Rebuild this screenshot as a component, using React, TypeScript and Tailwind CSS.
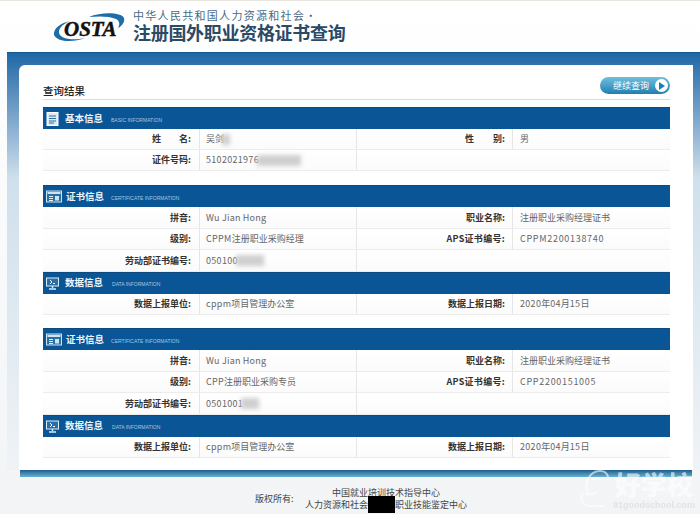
const cjk = '"Noto Sans CJK SC", "Noto Sans", sans-serif';

const DocIcon = () => (
  <svg width="14" height="14" viewBox="0 0 14 14" className="shrink-0">
    <rect x="1" y="0.5" width="11" height="13" fill="#dbeaf4" stroke="#fff" />
    <path d="M3 4h7M3 6.5h7M3 9h7M3 11h5" stroke="#2f6f9f" strokeWidth="1" />
  </svg>
);

const CardIcon = () => (
  <svg width="16" height="13" viewBox="0 0 16 13" className="shrink-0">
    <rect x="0.5" y="1" width="15" height="11" fill="#2a6fa3" stroke="#cfe3ef" />
    <rect x="1.5" y="2" width="13" height="2" fill="#cfe3ef" />
    <path d="M3 6.5h4M3 8.5h4M3 10.5h4" stroke="#e6f1f7" />
    <rect x="9" y="6" width="4" height="4.5" fill="#cfe3ef" />
  </svg>
);

const ScreenIcon = () => (
  <svg width="13" height="13" viewBox="0 0 13 13" className="shrink-0">
    <rect x="0.5" y="1" width="12" height="8" fill="#2a6fa3" stroke="#dcebf4" />
    <path d="M4 3l2 2-2 2M7 6.5h2" stroke="#fff" fill="none" />
    <path d="M6.5 9v2M3 12h7" stroke="#dcebf4" strokeWidth="1.4" />
  </svg>
);

const SectionHead = ({ icon, title, sub, gap }: { icon: React.ReactNode; title: string; sub: string; gap: string }) => (
  <div className={`h-[22px] bg-[#0a5596] border-t border-[#0c4a80] pl-[3px] flex items-center ${gap}`}>
    {icon}
    <span className="text-[9.5px] font-bold text-[#eef5fa] leading-none">{title}</span>
    <span className="ml-[3px] mt-[3px] text-[5px] leading-none text-[#a9c8e0] whitespace-nowrap" style={{ fontFamily: '"Liberation Sans", sans-serif' }}>
      {sub}
    </span>
  </div>
);

const Blur = ({ w }: { w: string }) => <span className={`inline-block h-[11px] -ml-[2px] align-middle bg-[#cfcfcf] blur-[2px] ${w}`} />;

type Cell = React.ReactNode;

const Row = ({ a, b, c, d, h = 'h-[21.5px]' }: { a: Cell; b: Cell; c?: Cell; d?: Cell; h?: string }) => (
  <div className={`grid grid-cols-[156px_157px_156px_158px] border-b border-[#ececec] bg-gradient-to-b from-white to-[#fbfbfb] ${h}`}>
    <div className="flex items-center justify-end pr-[8px] text-[9px] font-bold text-[#333]">{a}</div>
    <div className="flex items-center pl-[6px] text-[9px] text-[#666] border-l border-[#e6e6e6] whitespace-nowrap">{b}</div>
    <div className="flex items-center justify-end pr-[7px] text-[9px] font-bold text-[#333] border-l border-[#e6e6e6]">{c}</div>
    <div className={`flex items-center pl-[7px] text-[9px] text-[#666] whitespace-nowrap ${c ? 'border-l border-[#e6e6e6]' : ''}`}>{d}</div>
  </div>
);

const Num = ({ children }: { children: React.ReactNode }) => <span className="tracking-[0.3px]">{children}</span>;

const CertBlock = ({ level, aps, laborNo, blurW, unit }: { level: React.ReactNode; aps: string; laborNo: string; blurW: string; unit: string }) => (
  <div>
    <SectionHead icon={<CardIcon />} title="证书信息" sub="CERTIFICATE INFORMATION" gap="gap-[4px]" />
    <Row a="拼音:" b={<span className="tracking-[0.2px]">Wu Jian Hong</span>} c="职业名称:" d="注册职业采购经理证书" />
    <Row a="级别:" b={level} c={<span className="tracking-[0.3px]">APS证书编号:</span>} d={<span className="tracking-[0.7px]">{aps}</span>} />
    <Row a="劳动部证书编号:" b={<><Num>{laborNo}</Num><Blur w={blurW} /></>} />
    <SectionHead icon={<ScreenIcon />} title="数据信息" sub="DATA INFORMATION" gap="gap-[6px]" />
    <Row a="数据上报单位:" b={<><Num>{unit}</Num>项目管理办公室</>} c="数据上报日期:" d={<><Num>2020</Num>年<Num>04</Num>月<Num>15</Num>日</>} />
  </div>
);

export default function App() {
  return (
    <div className="relative w-[700px] h-[514px] overflow-hidden bg-gradient-to-b from-white to-[#f2f4f6]" style={{ fontFamily: cjk }}>
      {/* top */}
      <div className="h-[52px] border-t border-[#e9e6e0] pl-[53px] pt-[8px] flex items-start gap-[8px]">
        <svg width="72" height="32" viewBox="0 0 72 32" className="shrink-0 mt-[3px]">
          <path d="M1 23C0 16 8 11 17 9 8 13 4 18 7 23c4 5 16 5 25 3-10 4-27 5-31-3z" fill="#1b6ea8" />
          <path d="M36 5C48 0 68 0 71 6c1 4-2 8-6 10 2-3 2-7-2-9-6-3-18-3-27-2z" fill="#1b6ea8" />
          <text x="11" y="24" fontSize="21" fontWeight="bold" fontStyle="italic" fill="#111" stroke="#111" strokeWidth="0.5" style={{ fontFamily: '"Liberation Serif", serif' }}>OSTA</text>
        </svg>
        <div className="leading-none">
          <div className="text-[11px] text-[#4b6a84] tracking-[1.3px] mt-[1px] whitespace-nowrap">中华人民共和国人力资源和社会·</div>
          <div className="text-[18px] font-bold text-[#2b4a66] tracking-[-0.3px] mt-[2px] whitespace-nowrap">注册国外职业资格证书查询</div>
        </div>
      </div>

      {/* frame */}
      <div className="ml-[7px] h-[418px] pl-[12px] pr-[7px] pt-[12px] border-t border-[#15588f] bg-gradient-to-b from-[#1c68a6] via-[#cfe0ec] via-30% to-[#f0f3f6]">
        <div className="h-full rounded-tl-[6px] bg-white pl-[24px] pr-[23px]">
          <div className="h-[35px] border-b border-[#dcdcdc] flex items-end justify-between">
            <span className="text-[10.5px] font-medium text-[#222] leading-none mb-[3px]">查询结果</span>
            <div className="h-[17px] w-[70px] mb-[5px] rounded-full bg-gradient-to-b from-[#6fc0de] to-[#1c7fb0] flex items-center justify-between pl-[13px] pr-[2px]">
              <span className="text-[9px] text-white leading-none">继续查询</span>
              <span className="w-[13px] h-[13px] rounded-full bg-white flex items-center justify-center">
                <span className="ml-[1px] border-y-[4px] border-y-transparent border-l-[6px] border-l-[#1c7fb0]" />
              </span>
            </div>
          </div>

          <div className="mt-[7px]">
            <SectionHead icon={<DocIcon />} title="基本信息" sub="BASIC INFORMATION" gap="gap-[5px]" />
            <Row h="h-[21px]" a={<span className="flex w-[39px] justify-between"><span>姓</span><span>名:</span></span>} b={<>吴剑<Blur w="w-[8px]" /></>} c={<span className="flex w-[40px] justify-between"><span>性</span><span>别:</span></span>} d="男" />
            <Row h="h-[21px]" a="证件号码:" b={<><Num>5102021976</Num><Blur w="w-[44px]" /></>} c="" d="" />
          </div>

          <div className="mt-[14px]">
            <CertBlock level={<><Num>CPPM</Num>注册职业采购经理</>} aps="CPPM2200138740" laborNo="050100" blurW="w-[28px]" unit="cppm" />
          </div>
          <div className="mt-[13px]">
            <CertBlock level={<><Num>CPP</Num>注册职业采购专员</>} aps="CPP2200151005" laborNo="0501001" blurW="w-[18px]" unit="cppm" />
          </div>
        </div>
      </div>

      <div className="ml-[20px] w-[672px] h-[7px] bg-gradient-to-b from-[#1f5f8c] to-[#68b2d2]" />

      {/* footer */}
      <div className="mt-[10px] ml-[255px] flex items-center text-[9px] text-[#444] leading-[12px]">
        <span className="w-[50px]">版权所有:</span>
        <div className="flex flex-col items-center whitespace-nowrap">
          <span>中国就业培训技术指导中心</span>
          <span className="flex items-start h-[12px]">
            人力资源和社会<span className="inline-block w-[27px] h-[17px] -mt-[3px] bg-black" />职业技能鉴定中心
          </span>
        </div>
      </div>

      {/* watermark */}
      <div className="absolute left-[580px] top-[468px] flex items-start gap-[3px] text-white opacity-60 pointer-events-none">
        <svg width="30" height="42" viewBox="0 0 30 42" fill="none" stroke="#fff" strokeWidth="2" className="shrink-0">
          <path d="M8 28C3 14 10 3 20 3c6 0 9 4 8 10" />
          <path d="M2 26c-2 6 2 12 8 12h14M6 24c4 3 8 3 10 0M12 12c3-2 6-2 8 0" />
        </svg>
        <div className="flex flex-col items-center">
          <span className="text-[26px] font-black leading-[32px] whitespace-nowrap">好学校</span>
          <span className="text-[9px] font-bold leading-[10px] text-[#d4d9dd]" style={{ fontFamily: '"Liberation Sans", sans-serif' }}>91goodschool.com</span>
        </div>
      </div>
    </div>
  );
}
